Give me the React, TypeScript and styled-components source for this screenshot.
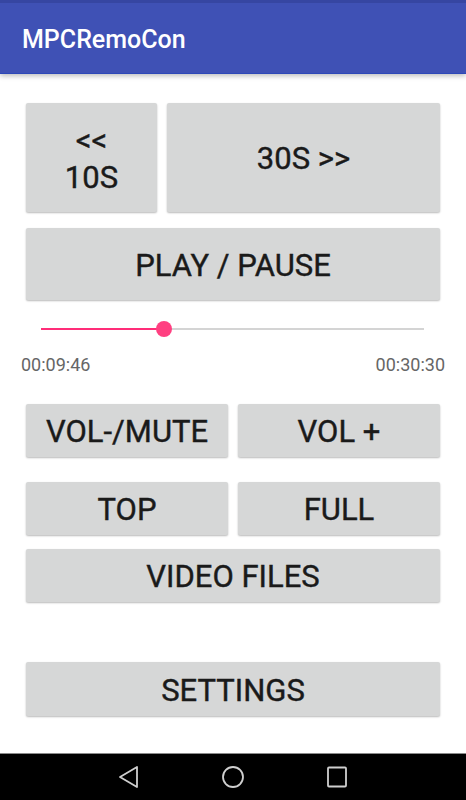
import React from "react";
import styled, { createGlobalStyle } from "styled-components";

const GlobalStyle = createGlobalStyle`
  html, body {
    margin: 0;
    padding: 0;
    background: #ffffff;
  }
  body {
    font-family: Roboto, "Noto Sans", sans-serif;
  }
`;

const Screen = styled.div`
  width: 466px;
  height: 800px;
  display: flex;
  flex-direction: column;
  overflow: hidden;
  background: #fff;
`;

const AppBar = styled.header`
  height: 74px;
  flex-shrink: 0;
  background: #3f51b5;
  border-top: 3px solid #3646a2;
  border-bottom: 1px solid #2d48b8;
  box-sizing: border-box;
  display: flex;
  align-items: center;
  padding: 2px 22px 0;
  box-shadow: 0 2px 5px rgba(0, 0, 0, 0.26);
  position: relative;
  z-index: 1;
`;

const Title = styled.h1`
  margin: 0;
  color: #fff;
  font-size: 25px;
  font-weight: 500;
  letter-spacing: 0;
`;

const Content = styled.main`
  flex: 1;
  display: flex;
  flex-direction: column;
  padding: 29px 26px 0;
`;

const Row = styled.div<{ $mt?: number }>`
  display: flex;
  gap: 10px;
  margin-top: ${(p) => p.$mt ?? 0}px;
`;

const Button = styled.button<{ $h: number; $grow?: number; $mt?: number }>`
  flex: ${(p) => (p.$grow ? `${p.$grow} 1 0` : "0 0 auto")};
  height: ${(p) => p.$h}px;
  margin-top: ${(p) => p.$mt ?? 0}px;
  border: none;
  border-radius: 2px;
  background: #d6d7d7;
  box-shadow: 0 1px 2px rgba(0, 0, 0, 0.28);
  color: #1a1a1a;
  font-family: Roboto, "Noto Sans", sans-serif;
  font-weight: 400;
  font-size: 31px;
  -webkit-text-stroke: 0.4px #1a1a1a;
  line-height: 37px;
  padding: 2px 0 0;
  display: flex;
  align-items: center;
  justify-content: center;
  text-align: center;
`;

const SliderArea = styled.div`
  margin: 20px -26px 0;
  display: flex;
  flex-direction: column;
`;

const Track = styled.div`
  position: relative;
  height: 18px;
  margin: 0 42px 0 41px;
`;

const Rail = styled.div`
  position: absolute;
  left: 0;
  right: 0;
  top: 8px;
  height: 2px;
  background: #d4d4d4;
`;

const Fill = styled.div`
  position: absolute;
  left: 0;
  top: 8px;
  height: 2px;
  background: #ff2d78;
`;

const Thumb = styled.div`
  position: absolute;
  top: 1px;
  width: 16px;
  height: 16px;
  margin-left: -8px;
  border-radius: 50%;
  background: #ff4081;
`;

const Times = styled.div`
  display: flex;
  justify-content: space-between;
  padding: 0 21px;
  margin-top: 17px;
  font-size: 18px;
  line-height: 20px;
  color: #666666;
`;

const NavBar = styled.nav`
  height: 47px;
  flex-shrink: 0;
  background: #000;
  border-top: 1px solid #8a8a8a;
  box-sizing: border-box;
  display: flex;
  align-items: center;
  justify-content: center;
  gap: 80px;
`;

const NavIcon = styled.svg`
  width: 24px;
  height: 24px;
  fill: none;
  stroke: #cfcfcf;
  stroke-width: 1.8;
`;

const total = 30 * 60 + 30;
const current = 9 * 60 + 46;

export default function App() {
  const pct = (current / total) * 100;
  return (
    <Screen>
      <GlobalStyle />
      <AppBar>
        <Title>MPCRemoCon</Title>
      </AppBar>
      <Content>
        <Row>
          <Button $h={109} $grow={131}>
            &lt;&lt;
            <br />
            10S
          </Button>
          <Button $h={109} $grow={273}>
            30S &gt;&gt;
          </Button>
        </Row>
        <Button $h={72} $mt={16}>
          PLAY / PAUSE
        </Button>
        <SliderArea>
          <Track>
            <Rail />
            <Fill style={{ width: `${pct}%` }} />
            <Thumb style={{ left: `${pct}%` }} />
          </Track>
          <Times>
            <span>00:09:46</span>
            <span>00:30:30</span>
          </Times>
        </SliderArea>
        <Row $mt={29}>
          <Button $h={53} $grow={1}>VOL-/MUTE</Button>
          <Button $h={53} $grow={1}>VOL +</Button>
        </Row>
        <Row $mt={25}>
          <Button $h={53} $grow={1}>TOP</Button>
          <Button $h={53} $grow={1}>FULL</Button>
        </Row>
        <Button $h={53} $mt={14}>
          VIDEO FILES
        </Button>
        <Button $h={54} $mt={60}>
          SETTINGS
        </Button>
      </Content>
      <NavBar>
        <NavIcon viewBox="0 0 24 24">
          <path d="M20 2 L3 12 L20 22 Z" strokeLinejoin="round" />
        </NavIcon>
        <NavIcon viewBox="0 0 24 24">
          <circle cx="12" cy="12" r="10" />
        </NavIcon>
        <NavIcon viewBox="0 0 24 24">
          <rect x="3" y="2.5" width="18" height="19" rx="1" />
        </NavIcon>
      </NavBar>
    </Screen>
  );
}
